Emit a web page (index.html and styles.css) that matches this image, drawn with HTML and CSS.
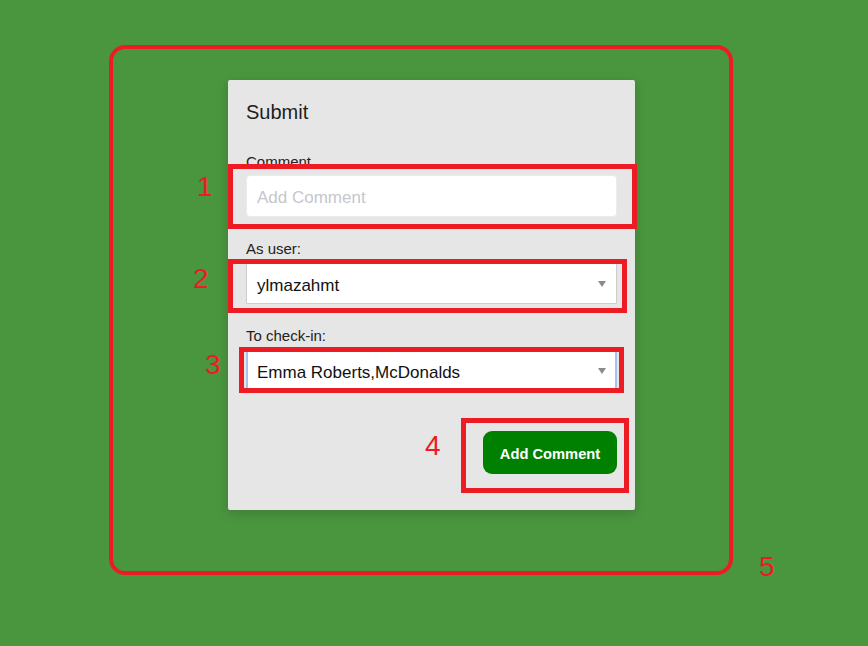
FILE: index.html
```html
<!DOCTYPE html>
<html lang="en">
<head>
<meta charset="utf-8">
<title>Submit</title>
<link rel="stylesheet" href="styles.css">
</head>
<body>
<main class="stage">
  <form class="card">
    <h1 class="title">Submit</h1>
    <div class="field">
      <label class="label">Comment</label>
      <input class="control input" type="text" placeholder="Add Comment">
    </div>
    <div class="field">
      <label class="label">As user:</label>
      <div class="control select"><span>ylmazahmt</span><span class="caret"></span></div>
    </div>
    <div class="field">
      <label class="label">To check-in:</label>
      <div class="control select focused"><span>Emma Roberts,McDonalds</span><span class="caret"></span></div>
    </div>
    <div class="actions">
      <button class="btn" type="button">Add Comment</button>
    </div>
  </form>

  <div class="mark mark-outer"></div>
  <div class="mark mark-1"></div>
  <div class="mark mark-2"></div>
  <div class="mark mark-3"></div>
  <div class="mark mark-4"></div>
  <span class="num num-1">1</span>
  <span class="num num-2">2</span>
  <span class="num num-3">3</span>
  <span class="num num-4">4</span>
  <span class="num num-5">5</span>
</main>
</body>
</html>
```

FILE: styles.css
```css
* { box-sizing: border-box; }

html, body {
  margin: 0;
  padding: 0;
}

body {
  background: #4a963e;
  font-family: "Liberation Sans", Arial, sans-serif;
  width: 868px;
  height: 646px;
  overflow: hidden;
}

.stage {
  position: relative;
  width: 868px;
  height: 646px;
  padding: 80px 0 0 228px;
}

.card {
  width: 407px;
  height: 430px;
  background: #e6e6e6;
  border-radius: 2px;
  box-shadow: 0 3px 12px rgba(0, 0, 0, 0.18);
  padding: 20px 18px 36px 18px;
  display: flex;
  flex-direction: column;
  margin: 0;
}

.title {
  margin: 0 0 29px 0;
  font-size: 20px;
  line-height: 24px;
  font-weight: normal;
  color: #1e1e1e;
}

.field {
  display: flex;
  flex-direction: column;
  gap: 4px;
  margin-bottom: 23px;
}

.label {
  font-size: 15px;
  line-height: 18px;
  color: #222;
}

.control {
  width: 371px;
  height: 42px;
  background: #fff;
  font-family: "Liberation Sans", Arial, sans-serif;
  font-size: 17px;
  color: #111;
  padding: 0 10px;
}

.input {
  border: 1px solid #ececec;
  border-radius: 4px;
  outline: none;
  padding-top: 3px;
}

.input::placeholder {
  color: #c6c6cd;
}

.select {
  display: flex;
  align-items: center;
  justify-content: space-between;
  border: 1px solid #cdcdcd;
  border-radius: 1px;
  padding-top: 5px;
}

.select.focused {
  border: 2px solid #a9c1ec;
  padding: 5px 9px 0 9px;
}

.caret {
  width: 0;
  height: 0;
  border-left: 4px solid transparent;
  border-right: 4px solid transparent;
  border-top: 6px solid #8a8a8a;
  margin-right: 0;
  margin-top: -4px;
}

.actions {
  display: flex;
  justify-content: flex-end;
  margin-top: 17px;
}

.btn {
  width: 134px;
  height: 43px;
  background: #008000;
  color: #fff;
  border: none;
  border-radius: 9px;
  font-family: "Liberation Sans", Arial, sans-serif;
  font-weight: bold;
  font-size: 14.7px;
  padding: 3px 0 0 0;
}

/* annotation overlay */
.mark {
  position: absolute;
  border: 5px solid #ed1c24;
}

.mark-outer {
  left: 109px;
  top: 45px;
  width: 624px;
  height: 530px;
  border-width: 4px;
  border-radius: 16px;
}

.mark-1 { left: 228px; top: 164px; width: 409px; height: 65px; }
.mark-2 { left: 228px; top: 259px; width: 399px; height: 54px; }
.mark-3 { left: 239px; top: 347px; width: 385px; height: 46px; }
.mark-4 { left: 461px; top: 418px; width: 168px; height: 75px; }

.num {
  position: absolute;
  font-family: "Liberation Sans", Arial, sans-serif;
  font-size: 28px;
  line-height: 28px;
  color: #ed1c24;
}

.num-1 { left: 197px; top: 173px; }
.num-2 { left: 193px; top: 265px; }
.num-3 { left: 205px; top: 351px; }
.num-4 { left: 425px; top: 432px; }
.num-5 { left: 759px; top: 553px; }
```
